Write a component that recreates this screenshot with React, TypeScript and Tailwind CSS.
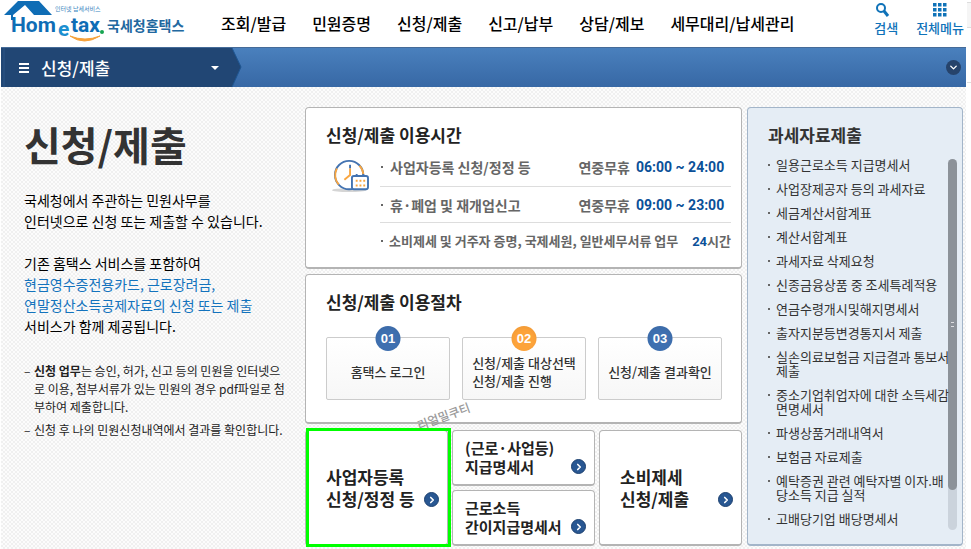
import { ChevronDown, ChevronRight } from 'lucide-react'

const NAV_ITEMS = ['조회/발급', '민원증명', '신청/제출', '신고/납부', '상담/제보', '세무대리/납세관리']

const HOURS = [
  { label: '사업자등록 신청/정정 등', open: '연중무휴', time: '06:00 ~ 24:00', height: 'h-10' },
  { label: '휴·폐업 및 재개업신고', open: '연중무휴', time: '09:00 ~ 23:00', height: 'h-9' },
]

const STEPS = [
  { no: '01', lines: ['홈택스 로그인'], color: 'bg-[#3f70b0]' },
  { no: '02', lines: ['신청/제출 대상선택', '신청/제출 진행'], color: 'bg-[#fda33a]' },
  { no: '03', lines: ['신청/제출 결과확인'], color: 'bg-[#3f70b0]' },
]

const TAX_DOCS = [
  ['일용근로소득 지급명세서'],
  ['사업장제공자 등의 과세자료'],
  ['세금계산서합계표'],
  ['계산서합계표'],
  ['과세자료 삭제요청'],
  ['신종금융상품 중 조세특례적용'],
  ['연금수령개시및해지명세서'],
  ['출자지분등변경통지서 제출'],
  ['실손의료보험금 지급결과 통보서', '제출'],
  ['중소기업취업자에 대한 소득세감', '면명세서'],
  ['파생상품거래내역서'],
  ['보험금 자료제출'],
  ['예탁증권 관련 예탁자별 이자.배', '당소득 지급 실적'],
  ['고배당기업 배당명세서'],
]

function Logo() {
  return (
    <a href="#" aria-label="국세청홈택스" className="block shrink-0">
      <svg width="186" height="44" viewBox="0 0 186 44">
        <path d="M4 15 L18 1 H39 L52 15 H34 L25 5 L13 15 V20 H11 V15 Z" fill="#0f6db5" />
        <text x="55" y="11" fontSize="6" fill="#3c86c0" fontFamily="'Noto Sans CJK KR', sans-serif">인터넷 납세서비스</text>
        <g fill="#0f6db5" fontFamily="Roboto, sans-serif" fontWeight="700">
          <text x="11" y="32" fontSize="21">Hom</text>
          <text x="58" y="36" fontSize="21" fill="#1b8fd0">e</text>
          <text x="71" y="32" fontSize="21">tax</text>
        </g>
        <circle cx="102" cy="32" r="2" fill="#16a551" />
        <path d="M70 36 Q84 46 100 36 Q85 42 70 36 Z" fill="#f7a23b" stroke="#f7a23b" />
        <text x="107" y="31" fontSize="14" fontWeight="700" fill="#22689f" fontFamily="'Noto Sans CJK KR', sans-serif">국세청홈택스</text>
      </svg>
    </a>
  )
}

function Header() {
  return (
    <header className="flex h-[47px] items-start bg-white pr-[2px]">
      <Logo />
      <nav className="ml-[35px] flex flex-1 gap-[26px] pt-[11px] text-base font-medium leading-6 whitespace-nowrap text-black">
        {NAV_ITEMS.map((item) => (
          <a key={item} href="#">{item}</a>
        ))}
      </nav>
      <div className="flex gap-[18px] pt-[2px] text-[13px] font-medium leading-5 whitespace-nowrap text-[#0f72b8]">
        <button type="button" className="flex flex-col items-start">
          <svg width="16" height="16" viewBox="0 0 16 16" fill="none" stroke="#0f72b8">
            <circle cx="7" cy="6" r="4" strokeWidth="2" />
            <path d="M10 9 L14 14" strokeWidth="3" />
          </svg>
          검색
        </button>
        <button type="button" className="flex flex-col items-center">
          <svg width="16" height="16" viewBox="0 0 16 16" fill="#0f72b8">
            {[1, 6, 11].map((y) => [1, 6, 11].map((x) => <rect key={`${x}-${y}`} x={x} y={y} width="3.5" height="3.5" />))}
          </svg>
          전체메뉴
        </button>
      </div>
    </header>
  )
}

function MenuBar() {
  return (
    <div className="ml-px flex h-10 items-center justify-between border-t border-[#456b98] bg-linear-to-b from-[#4a80bd] to-[#3768a5] pr-[5px]">
      <div className="relative h-full">
        <svg width="241" height="39" viewBox="0 0 241 39" className="block">
          <path d="M0 0 H231 L240 19 L231 39 H0 Z" fill="#214674" />
          <path d="M231 0 L240 19 L231 39" fill="none" stroke="#1f5692" />
          <path d="M3 0 V39" stroke="#2c5586" />
        </svg>
        <button type="button" className="absolute inset-0 flex items-center pl-[18px] text-white">
          <svg width="10" height="10" viewBox="0 0 10 10" fill="#fff">
            <path d="M0 0h10v2H0zM0 4h10v2H0zM0 8h10v2H0z" />
          </svg>
          <span className="ml-3 text-[17px] font-medium leading-6">신청/제출</span>
          <svg width="8" height="4" viewBox="0 0 8 4" className="ml-[101px]" fill="#fff">
            <path d="M0 0h8L4 4z" />
          </svg>
        </button>
      </div>
      <button type="button" aria-label="펼치기" className="flex size-[15px] items-center justify-center rounded-full bg-[#26436b] text-white">
        <ChevronDown size={11} strokeWidth={3} />
      </button>
    </div>
  )
}

function Intro() {
  return (
    <section className="w-[304px] shrink-0 pl-[23px] text-black">
      <h1 className="pt-[27px] text-[40px] font-bold leading-[60px] text-[#333]">신청/제출</h1>
      <div className="mt-4 text-sm leading-[21px] whitespace-nowrap">
        <p>국세청에서 주관하는 민원사무를</p>
        <p>인터넷으로 신청 또는 제출할 수 있습니다.</p>
        <p className="mt-[21px]">기존 홈택스 서비스를 포함하여</p>
        <p className="text-[#1373bd]">현금영수증전용카드, 근로장려금,</p>
        <p className="text-[#1373bd]">연말정산소득공제자료의 신청 또는 제출</p>
        <p>서비스가 함께 제공됩니다.</p>
      </div>
      <ul className="mt-[25px] space-y-[5px] text-xs leading-[18px] whitespace-nowrap text-[#222]">
        <li className="flex">
          <span className="w-[10px]">–</span>
          <p>
            <b>신청 업무</b>는 승인, 허가, 신고 등의 민원을 인터넷으<br />
            로 이용, 첨부서류가 있는 민원의 경우 pdf파일로 첨<br />
            부하여 제출합니다.
          </p>
        </li>
        <li className="flex">
          <span className="w-[10px]">–</span>
          <p>신청 후 나의 민원신청내역에서 결과를 확인합니다.</p>
        </li>
      </ul>
    </section>
  )
}

function ClockIcon() {
  return (
    <svg width="38" height="34" viewBox="0 0 40 36" fill="none" className="shrink-0">
      <ellipse cx="18" cy="33" rx="18" ry="2" fill="#d5d5d5" />
      <circle cx="18" cy="17" r="15" fill="#fff" stroke="#4373b1" strokeWidth="2" />
      <path d="M5 10 A15 15 0 0 0 7 27 M29 7 A15 15 0 0 1 33 17" stroke="#f9a640" strokeWidth="2" />
      <path d="M19 6 V10" stroke="#4373b1" strokeWidth="2" />
      <path d="M19 10 V17 L13 22" stroke="#f9a640" strokeWidth="2" />
      <rect x="21" y="18" width="17" height="14" rx="2" fill="#fff" stroke="#4373b1" strokeWidth="2" />
      <path d="M26 16 v3 M33 16 v3" stroke="#4373b1" strokeWidth="2" />
      <path d="M25 23h2m2 0h2m2 0h2M25 28h2m2 0h2m2 0h2" stroke="#f9a640" strokeWidth="2" />
    </svg>
  )
}

function HoursCard() {
  return (
    <section className="h-[162px] rounded border border-b-2 border-[#b4b4b4] bg-white pt-[15px] pr-[10px] pl-5">
      <h2 className="text-[17px] font-bold leading-6 text-[#222]">신청/제출 이용시간</h2>
      <div className="flex">
        <div className="w-[54px] shrink-0 pt-3 pl-[6px]">
          <ClockIcon />
        </div>
        <ul className="flex-1 text-[13px] font-bold whitespace-nowrap text-[#666]">
          {HOURS.map((row) => (
            <li key={row.label} className={`flex items-center border-b border-[#ddd] pr-[9px] text-sm ${row.height}`}>
              <span className="mr-[7px] ml-px size-[2px] bg-[#666]" />
              <span className="flex-1">{row.label}</span>
              <span>{row.open}</span>
              <span className="ml-[6px] w-[86px] font-['Roboto'] text-sm text-[#0b5098]">{row.time}</span>
            </li>
          ))}
          <li className="flex h-9 items-center">
            <span className="mr-[6px] ml-px size-[2px] bg-[#666]" />
            <span className="flex-1">소비제세 및 거주자 증명, 국제세원, 일반세무서류 업무</span>
            <span><span className="font-['Roboto'] text-[#0b5098]">24</span>시간</span>
          </li>
        </ul>
      </div>
    </section>
  )
}

function StepsCard() {
  return (
    <section className="h-[150px] rounded border border-b-2 border-[#b4b4b4] bg-white pt-[15px] pr-[19px] pl-5">
      <h2 className="text-[17px] font-bold leading-6 text-[#222]">신청/제출 이용절차</h2>
      <ol className="mt-[23px] grid grid-cols-3 gap-3">
        {STEPS.map((step) => (
          <li key={step.no} className="relative flex h-[63px] items-center justify-center rounded-xs border border-[#ccc] bg-linear-to-b from-white to-[#f7f7f7] pt-[6px]">
            <span className={`absolute -top-3 left-1/2 flex size-[25px] -translate-x-1/2 items-center justify-center rounded-full font-['Liberation_Sans'] text-[13px] font-bold text-white inset-shadow-sm ${step.color}`}>
              {step.no}
            </span>
            <p className="text-[13px] font-medium leading-[18px] whitespace-nowrap text-[#333]">
              {step.lines.map((line) => (
                <span key={line} className="block">{line}</span>
              ))}
            </p>
          </li>
        ))}
      </ol>
    </section>
  )
}

function ArrowDot() {
  return (
    <span className="flex size-[15px] shrink-0 items-center justify-center rounded-full border border-[#1c406f] bg-[#285792] text-white">
      <ChevronRight size={10} strokeWidth={4} />
    </span>
  )
}

function Shortcuts() {
  return (
    <div className="relative mt-px grid h-[116px] grid-cols-3 gap-1 font-bold whitespace-nowrap text-[#222]">
      <a href="#" className="relative flex items-end justify-between rounded border border-b-2 border-[#b4b4b4] bg-white pr-2 pb-[34px] pl-5 text-[17px] leading-[22px]">
        <span>사업자등록<br />신청/정정 등</span>
        <span className="pb-[3px]"><ArrowDot /></span>
        <span className="absolute -top-[3px] -right-1 -bottom-[3px] left-0 border-3 border-[#00ff00]" />
      </a>
      <div className="grid grid-rows-2 gap-1 text-[15px] leading-[19px]">
        <a href="#" className="flex items-end justify-between rounded border border-b-2 border-[#b4b4b4] bg-white pr-2 pb-2 pl-3">
          <span>(근로·사업등)<br />지급명세서</span>
          <span className="pb-[2px]"><ArrowDot /></span>
        </a>
        <a href="#" className="flex items-end justify-between rounded border border-b-2 border-[#b4b4b4] bg-white pr-2 pb-2 pl-3">
          <span>근로소득<br />간이지급명세서</span>
          <span className="pb-[2px]"><ArrowDot /></span>
        </a>
      </div>
      <a href="#" className="flex items-end justify-between rounded border border-b-2 border-[#b4b4b4] bg-white pr-2 pb-[34px] pl-5 text-[17px] leading-[22px]">
        <span>소비제세<br />신청/제출</span>
        <span className="pb-[3px]"><ArrowDot /></span>
      </a>
      <span className="absolute -top-6 left-[111px] -rotate-20 text-xs font-medium leading-5 text-[#999]">리얼밀쿠티</span>
    </div>
  )
}

function TaxDocs() {
  return (
    <aside className="relative h-[439px] w-[216px] shrink-0 rounded border border-b-2 border-[#a3b5c9] bg-[#e5edf5] pt-[15px] pl-5">
      <h2 className="text-[17px] font-bold leading-6 text-[#333]">과세자료제출</h2>
      <ul className="mt-[11px] space-y-[10px] text-[13px] leading-[14px] whitespace-nowrap text-[#333]">
        {TAX_DOCS.map((lines) => (
          <li key={lines[0]} className="flex">
            <span className="mt-[6px] mr-[6px] size-[2px] shrink-0 bg-[#666]" />
            <a href="#">
              {lines.map((line) => (
                <span key={line} className="block">{line}</span>
              ))}
            </a>
          </li>
        ))}
      </ul>
      <div className="absolute top-[51px] right-[5px] h-[371px] w-[9px] rounded-full bg-[#9aa4b0]/35">
        <div className="flex h-[331px] items-center justify-center rounded-full bg-[#62686c]/60">
          <div className="h-[5px] w-[3px] border-y border-white/70" />
        </div>
      </div>
    </aside>
  )
}

export default function App() {
  return (
    <div className="flex min-h-screen bg-white font-['Noto_Sans_CJK_KR',sans-serif]">
      <div className="flex min-w-0 flex-1 flex-col">
        <Header />
        <MenuBar />
        <main className="ml-px flex flex-1 bg-[#fcfcfc] bg-[repeating-conic-gradient(#f0f0f0_0_25%,#fcfcfc_0_50%)] bg-size-[4px_4px] pr-[3px]">
          <Intro />
          <div className="flex min-w-0 flex-1 flex-col gap-[5px] pt-5 pr-[5px]">
            <HoursCard />
            <StepsCard />
            <Shortcuts />
          </div>
          <div className="pt-5">
            <TaxDocs />
          </div>
        </main>
      </div>
      <div className="w-[5px] shrink-0 pt-[2px] pl-px">
        <div className="h-[26px] border-y border-[#ddd] bg-[#f5f5f5]" />
        <div className="h-[55px] border-b border-[#ddd]" />
      </div>
    </div>
  )
}
